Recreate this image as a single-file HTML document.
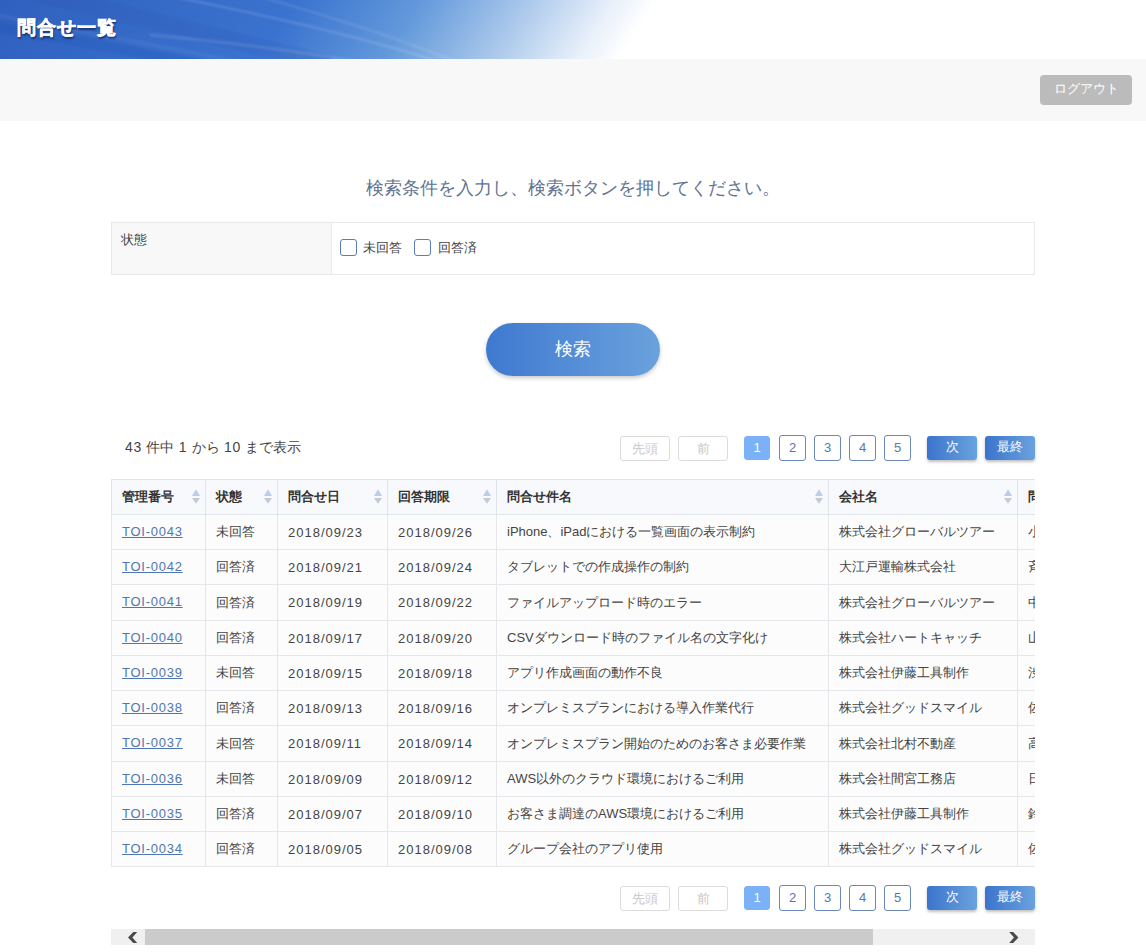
<!DOCTYPE html>
<html lang="ja">
<head>
<meta charset="utf-8">
<style>
*{box-sizing:border-box;margin:0;padding:0}
html,body{width:1146px;height:952px;overflow:hidden;background:#fff}
body{font-family:"Liberation Sans",sans-serif;color:#444;font-size:13px;position:relative}
.abs{position:absolute}
#hdr{left:0;top:0;width:1146px;height:59px;overflow:hidden}
#title{left:17px;top:14px;font-size:19px;letter-spacing:1.1px;font-weight:bold;color:#fff;line-height:28px;white-space:nowrap;-webkit-text-stroke:.5px #fff;text-shadow:1px 2px 2px rgba(0,0,50,.6)}
#bar{left:0;top:59px;width:1146px;height:62px;background:#f8f8f8}
#logout{left:1040px;top:75px;width:92px;height:30px;background:#bbb;border-radius:4px;color:#fff;font-size:13px;line-height:28px;text-align:center}
#guide{left:0;top:174px;width:1146px;text-align:center;font-size:18px;line-height:28px;color:#62738f}
#cond{left:111px;top:222px;width:924px;height:53px;border:1px solid #e9e9e9}
#cond .lab{position:absolute;left:0;top:0;width:220px;height:51px;background:#f8f8f8;border-right:1px solid #e9e9e9;padding:8px 0 0 9px;line-height:18px;color:#444}
.cb{position:absolute;top:16px;width:17px;height:17px;border:1px solid #5a7cc0;border-radius:3px;background:#fff}
.cbl{position:absolute;top:15px;line-height:20px;color:#444}
#sbtn{left:486px;top:323px;width:174px;height:53px;border-radius:27px;background:linear-gradient(90deg,#3f79d0,#6aa2dd);box-shadow:0 2px 4px rgba(0,0,0,.22);color:#fff;font-size:18px;line-height:53px;text-align:center}
.ln{letter-spacing:.8px}
.count{left:125px;font-size:14px;word-spacing:.4px;line-height:20px;color:#444;white-space:nowrap}
.pg{position:absolute;height:25px;border-radius:3px;font-size:13px;line-height:23px;text-align:center}
.pg.dis{width:50px;border:1px solid #dcdcdc;color:#c8c8c8;background:#fff}
.pg.num{width:27px;height:26px;margin-top:-1px;border:1px solid #6a87ba;color:#5877ad;background:#fff;line-height:24px}
.pg.cur{width:26px;height:24px;border:1px solid #7bb1f6;background:#7bb1f6;color:#fff;line-height:22px}
.pg.nx{width:50px;height:24px;border:none;line-height:22px;color:#fff;background:linear-gradient(90deg,#3b74cc,#6aa2de);box-shadow:0 2px 3px rgba(0,0,0,.25)}
#tblwrap{left:111px;top:479px;width:924px;height:388px;overflow:hidden}
table{border-collapse:collapse;table-layout:fixed;width:1100px}
th,td{border:1px solid #e6e7ea;text-align:left;white-space:nowrap;overflow:hidden;padding:0 0 0 10px;font-size:13px}
th{background:#f7f9fd;border-color:#dfe3ea;font-weight:bold;color:#333;position:relative}
td{background:#fcfcfc;color:#444}
td a{color:#5076b0;text-decoration:underline;letter-spacing:.75px;position:relative;top:-1px}
.dt{letter-spacing:1px}
.sort{position:absolute;right:5px;top:9px;width:8px;height:15px}
#scroll{left:111px;top:929px;width:924px;height:16px;background:#f0f0f0}
#thumb{left:34px;top:0;width:728px;height:16px;background:#cbcbcb}
</style>
</head>
<body>
<div id="hdr" class="abs">
<svg width="1146" height="59" viewBox="0 0 1146 59">
<defs>
<linearGradient id="g1" gradientUnits="userSpaceOnUse" x1="0" y1="0" x2="468" y2="300">
<stop offset="0" stop-color="#3060bf"/>
<stop offset="0.45" stop-color="#3a73cf"/>
<stop offset="0.64" stop-color="#6399db"/>
<stop offset="0.80" stop-color="#aac8eb"/>
<stop offset="0.93" stop-color="#e8f0fa"/>
<stop offset="0.995" stop-color="#ffffff"/>
</linearGradient>
<filter id="bl"><feGaussianBlur stdDeviation="1.2"/></filter>
</defs>
<rect width="1146" height="59" fill="#fff"/>
<rect width="1146" height="59" fill="url(#g1)"/>
<g filter="url(#bl)" fill="none">
<path d="M40 -6 L330 64" stroke="#1f48a8" stroke-opacity=".16" stroke-width="16"/>
<path d="M-40 20 L200 64" stroke="#1f48a8" stroke-opacity=".14" stroke-width="10"/>
<path d="M179 -2 Q340 30 440 62" stroke="#ffffff" stroke-opacity=".20" stroke-width="1.6"/>
<path d="M265 -2 Q390 34 456 62" stroke="#ffffff" stroke-opacity=".15" stroke-width="1.6"/>
<path d="M150 35 Q270 46 360 62" stroke="#ffffff" stroke-opacity=".14" stroke-width="2"/>
<path d="M-40 8 L240 62" stroke="#ffffff" stroke-opacity=".05" stroke-width="4"/>
</g>
</svg>
</div>
<div id="title" class="abs">問合せ一覧</div>
<div id="bar" class="abs"></div>
<div id="logout" class="abs">ログアウト</div>
<div id="guide" class="abs">検索条件を入力し、検索ボタンを押してください。</div>
<div id="cond" class="abs">
<div class="lab">状態</div>
<div class="cb" style="left:228px"></div><div class="cbl" style="left:251px">未回答</div>
<div class="cb" style="left:302px"></div><div class="cbl" style="left:326px">回答済</div>
</div>
<div id="sbtn" class="abs">検索</div>

<div class="abs count" style="top:437px"><span class="ln">43</span> 件中 <span class="ln">1</span> から <span class="ln">10</span> まで表示</div>
<div class="abs" style="left:0;top:436px">
<div class="pg dis" style="left:620px">先頭</div>
<div class="pg dis" style="left:678px">前</div>
<div class="pg cur" style="left:744px">1</div>
<div class="pg num" style="left:779px">2</div>
<div class="pg num" style="left:814px">3</div>
<div class="pg num" style="left:849px">4</div>
<div class="pg num" style="left:884px">5</div>
<div class="pg nx" style="left:927px">次</div>
<div class="pg nx" style="left:985px">最終</div>
</div>

<div id="tblwrap" class="abs">
<table>
<colgroup><col style="width:94px"><col style="width:72px"><col style="width:110px"><col style="width:109px"><col style="width:332px"><col style="width:189px"><col style="width:194px"></colgroup>
<tbody>
<tr style="height:35px"><th>管理番号<svg class="sort" viewBox="0 0 8 15"><path d="M4 0.3L8 6.9H0Z" fill="#bccde9"/><path d="M4 14.7L8 9H0Z" fill="#c4cad6"/></svg></th><th>状態<svg class="sort" viewBox="0 0 8 15"><path d="M4 0.3L8 6.9H0Z" fill="#bccde9"/><path d="M4 14.7L8 9H0Z" fill="#c4cad6"/></svg></th><th>問合せ日<svg class="sort" viewBox="0 0 8 15"><path d="M4 0.3L8 6.9H0Z" fill="#bccde9"/><path d="M4 14.7L8 9H0Z" fill="#c4cad6"/></svg></th><th>回答期限<svg class="sort" viewBox="0 0 8 15"><path d="M4 0.3L8 6.9H0Z" fill="#bccde9"/><path d="M4 14.7L8 9H0Z" fill="#c4cad6"/></svg></th><th>問合せ件名<svg class="sort" viewBox="0 0 8 15"><path d="M4 0.3L8 6.9H0Z" fill="#bccde9"/><path d="M4 14.7L8 9H0Z" fill="#c4cad6"/></svg></th><th>会社名<svg class="sort" viewBox="0 0 8 15"><path d="M4 0.3L8 6.9H0Z" fill="#bccde9"/><path d="M4 14.7L8 9H0Z" fill="#c4cad6"/></svg></th><th>問合せ者<svg class="sort" viewBox="0 0 8 15"><path d="M4 0.3L8 6.9H0Z" fill="#bccde9"/><path d="M4 14.7L8 9H0Z" fill="#c4cad6"/></svg></th></tr>
<tr style="height:35px"><td><a>TOI-0043</a></td><td>未回答</td><td><span class="dt">2018/09/23</span></td><td><span class="dt">2018/09/26</span></td><td>iPhone、iPadにおける一覧画面の表示制約</td><td>株式会社グローバルツアー</td><td>小林</td></tr>
<tr style="height:35px"><td><a>TOI-0042</a></td><td>回答済</td><td><span class="dt">2018/09/21</span></td><td><span class="dt">2018/09/24</span></td><td>タブレットでの作成操作の制約</td><td>大江戸運輸株式会社</td><td>斉藤</td></tr>
<tr style="height:36px"><td><a>TOI-0041</a></td><td>回答済</td><td><span class="dt">2018/09/19</span></td><td><span class="dt">2018/09/22</span></td><td>ファイルアップロード時のエラー</td><td>株式会社グローバルツアー</td><td>中村</td></tr>
<tr style="height:35px"><td><a>TOI-0040</a></td><td>回答済</td><td><span class="dt">2018/09/17</span></td><td><span class="dt">2018/09/20</span></td><td>CSVダウンロード時のファイル名の文字化け</td><td>株式会社ハートキャッチ</td><td>山田</td></tr>
<tr style="height:35px"><td><a>TOI-0039</a></td><td>未回答</td><td><span class="dt">2018/09/15</span></td><td><span class="dt">2018/09/18</span></td><td>アプリ作成画面の動作不良</td><td>株式会社伊藤工具制作</td><td>渋谷</td></tr>
<tr style="height:35px"><td><a>TOI-0038</a></td><td>回答済</td><td><span class="dt">2018/09/13</span></td><td><span class="dt">2018/09/16</span></td><td>オンプレミスプランにおける導入作業代行</td><td>株式会社グッドスマイル</td><td>佐藤</td></tr>
<tr style="height:36px"><td><a>TOI-0037</a></td><td>未回答</td><td><span class="dt">2018/09/11</span></td><td><span class="dt">2018/09/14</span></td><td>オンプレミスプラン開始のためのお客さま必要作業</td><td>株式会社北村不動産</td><td>高橋</td></tr>
<tr style="height:35px"><td><a>TOI-0036</a></td><td>未回答</td><td><span class="dt">2018/09/09</span></td><td><span class="dt">2018/09/12</span></td><td>AWS以外のクラウド環境におけるご利用</td><td>株式会社間宮工務店</td><td>日野</td></tr>
<tr style="height:35px"><td><a>TOI-0035</a></td><td>回答済</td><td><span class="dt">2018/09/07</span></td><td><span class="dt">2018/09/10</span></td><td>お客さま調達のAWS環境におけるご利用</td><td>株式会社伊藤工具制作</td><td>鈴木</td></tr>
<tr style="height:35px"><td><a>TOI-0034</a></td><td>回答済</td><td><span class="dt">2018/09/05</span></td><td><span class="dt">2018/09/08</span></td><td>グループ会社のアプリ使用</td><td>株式会社グッドスマイル</td><td>佐藤</td></tr>
</tbody>
</table>
</div>

<div class="abs" style="left:0;top:886px">
<div class="pg dis" style="left:620px">先頭</div>
<div class="pg dis" style="left:678px">前</div>
<div class="pg cur" style="left:744px">1</div>
<div class="pg num" style="left:779px">2</div>
<div class="pg num" style="left:814px">3</div>
<div class="pg num" style="left:849px">4</div>
<div class="pg num" style="left:884px">5</div>
<div class="pg nx" style="left:927px">次</div>
<div class="pg nx" style="left:985px">最終</div>
</div>

<div id="scroll" class="abs"><div id="thumb" class="abs"></div>
<svg class="abs" style="left:0;top:0" width="924" height="16" viewBox="0 0 924 16"><path d="M17 8.5L22.3 3H26.2L21.4 8.5L26.2 14H22.3Z" fill="#4a4a4a"/><path d="M907.4 8.5L902.1 3H898.2L903 8.5L898.2 14H902.1Z" fill="#4a4a4a"/></svg>
</div>
</body>
</html>
